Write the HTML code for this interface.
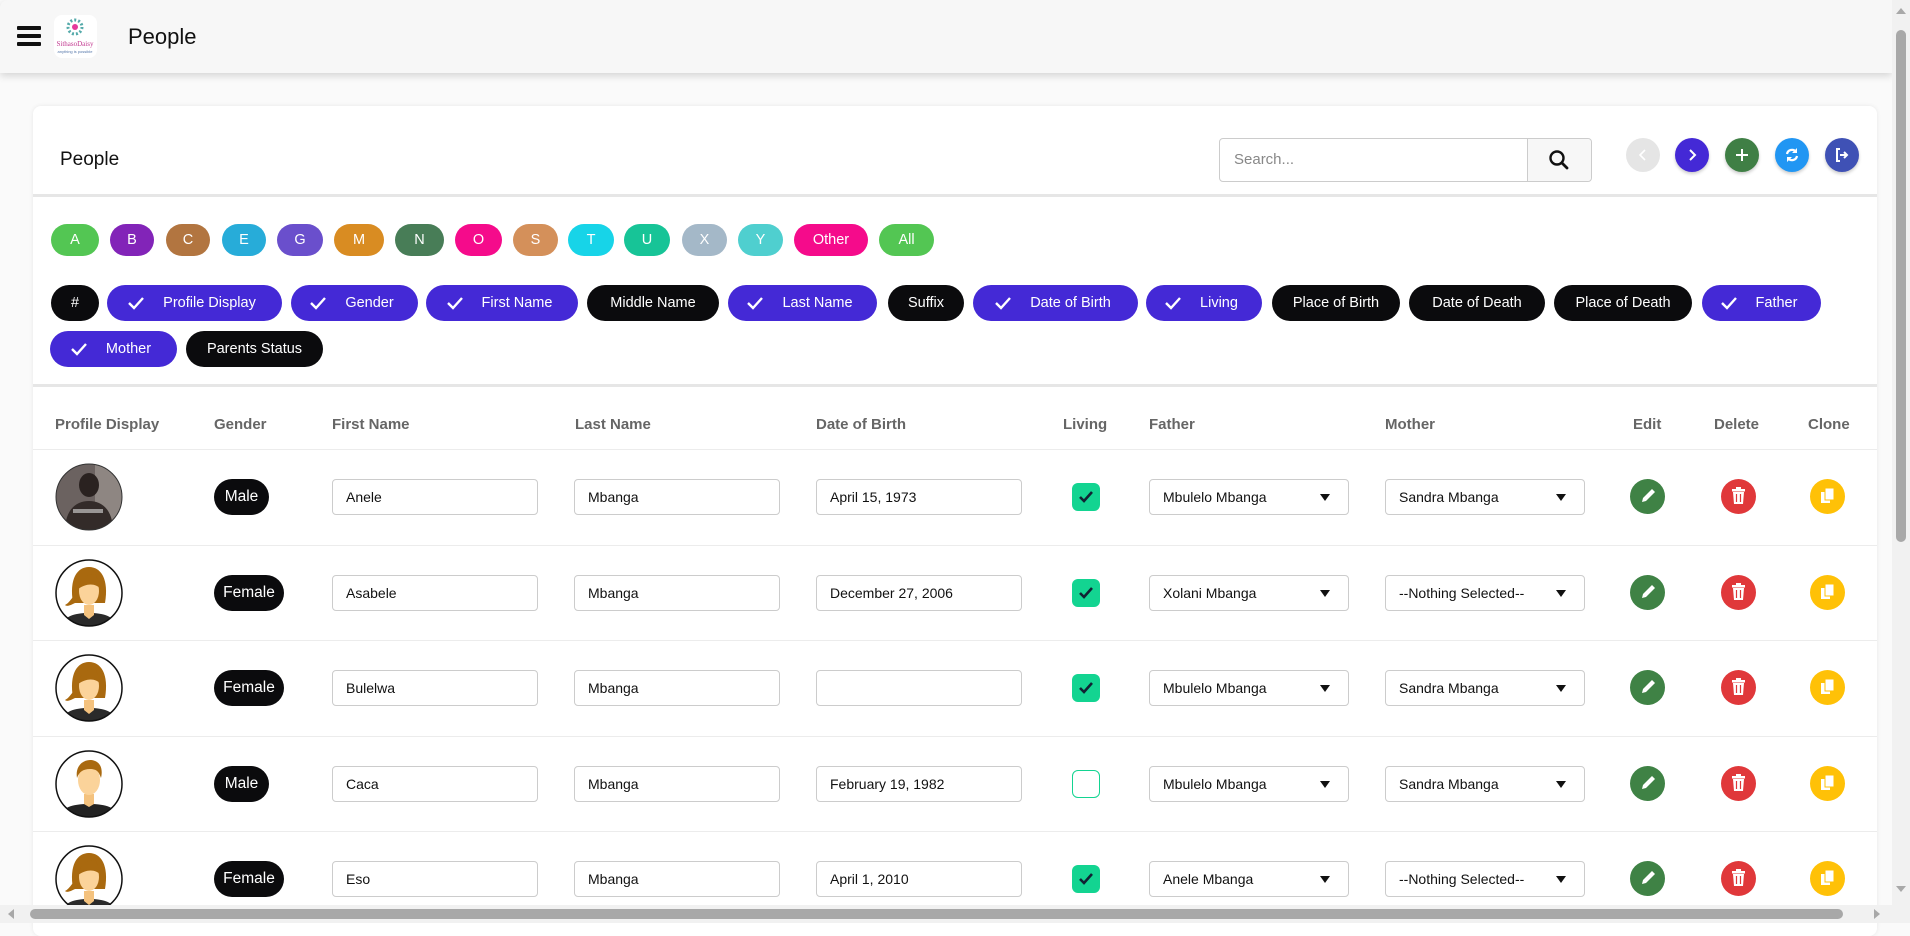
<!DOCTYPE html>
<html><head><meta charset="utf-8"><style>
*{box-sizing:border-box;margin:0;padding:0}
body{width:1910px;height:923px;overflow:hidden;background:#fafafa;font-family:"Liberation Sans",sans-serif;position:relative;color:#111}
.a{position:absolute}
.hdr{left:0;top:0;width:1892px;height:73px;background:#f7f7f7;box-shadow:0 3px 8px rgba(0,0,0,.15);border-top-left-radius:8px}
.ham{left:17px;width:24px;height:4px;background:#111;border-radius:1px}
.card{left:33px;top:106px;width:1844px;height:830px;background:#fff;border-radius:8px;box-shadow:0 0 5px rgba(0,0,0,.08)}
.hl{left:33px;width:1844px;height:3px;background:#e6e6e6}
.pill{height:32px;top:224px;border-radius:16px;color:#fff;font-size:14.5px;display:flex;align-items:center;justify-content:center}
.chip{height:36px;border-radius:18px;color:#fff;font-size:14.5px;display:flex;align-items:center;justify-content:center;background:#4429d6}
.chip.k{background:#0b0b0d}
.chip svg{margin-right:18px;margin-left:-6px}
.th{top:416px;font-size:15px;font-weight:bold;color:#666}
.row{left:33px;width:1844px;height:96px;border-top:1px solid #ececec}
.in{height:36px;border:1px solid #ccc;border-radius:4px;font-size:14px;padding-left:13px;display:flex;align-items:center;background:#fff}
.sel svg{position:absolute;right:18px;top:14px}
.badge{height:36px;border-radius:18px;background:#0b0b0d;color:#fff;font-size:15.5px;display:flex;align-items:center;justify-content:center}
.cb{width:28px;height:28px;border-radius:6px;background:#13d491;display:flex;align-items:center;justify-content:center}
.cb.off{background:#fff;border:1px solid #13d491}
.act{width:35px;height:35px;border-radius:50%;display:flex;align-items:center;justify-content:center}
.cir{width:34px;height:34px;border-radius:50%;top:138px;display:flex;align-items:center;justify-content:center;box-shadow:0 2px 3px rgba(0,0,0,.2)}
</style></head><body>
<div class="a hdr"></div>
<div class="a ham" style="top:26px"></div><div class="a ham" style="top:34px"></div><div class="a ham" style="top:42px"></div>
<div class="a" style="left:54px;top:15px;width:43px;height:43px;background:#fff;border-radius:8px;overflow:hidden">
<svg width="43" height="43"><circle cx="21" cy="12" r="7" fill="none" stroke="#5aa" stroke-width="3" stroke-dasharray="2 2"/><circle cx="21" cy="12" r="3" fill="#e5399b"/><text x="21" y="31" font-size="7" fill="#c2388f" text-anchor="middle" font-family="Liberation Serif">SithasoDaisy</text><text x="21" y="38" font-size="4" fill="#57a" text-anchor="middle">anything is possible</text></svg></div>
<div class="a" style="left:128px;top:24px;font-size:22px;color:#111">People</div>

<div class="a card"></div>
<div class="a" style="left:60px;top:149px;font-size:19px;color:#111">People</div>
<div class="a" style="left:1219px;top:138px;width:373px;height:44px;border:1px solid #ccc;border-radius:4px;background:#fff"></div>
<div class="a" style="left:1527px;top:139px;width:64px;height:42px;background:#f7f7f7;border-left:1px solid #ccc;border-radius:0 4px 4px 0"></div>
<div class="a" style="left:1234px;top:151px;font-size:15px;color:#888">Search...</div>
<svg class="a" style="left:1548px;top:149px" width="22" height="22"><circle cx="9" cy="9" r="6.5" fill="none" stroke="#111" stroke-width="2.4"/><path d="M14 14l5 5" stroke="#111" stroke-width="2.8" stroke-linecap="round"/></svg>
<div class="a cir" style="left:1626px;background:#e5e5e5;box-shadow:none"><svg width="14" height="14"><path d="M9 2L4 7l5 5" stroke="#fff" stroke-width="1.6" fill="none"/></svg></div>
<div class="a cir" style="left:1675px;background:#4429d6"><svg width="14" height="14"><path d="M5 2l5 5-5 5" stroke="#fff" stroke-width="2" fill="none"/></svg></div>
<div class="a cir" style="left:1725px;background:#3f7f45"><svg width="14" height="14"><path d="M7 1v12M1 7h12" stroke="#fff" stroke-width="2"/></svg></div>
<div class="a cir" style="left:1775px;background:#2196f3"><svg width="16" height="16"><path d="M3 7a5 5 0 0 1 9-2M13 9a5 5 0 0 1-9 2" stroke="#fff" stroke-width="2.2" fill="none"/><path d="M13 1v5H8zM3 15v-5h5z" fill="#fff"/></svg></div>
<div class="a cir" style="left:1825px;background:#3f51b5"><svg width="16" height="16"><path d="M6 2H3v12h3" stroke="#fff" stroke-width="2" fill="none"/><path d="M6 8h7M10 5l3 3-3 3" stroke="#fff" stroke-width="2" fill="none"/></svg></div>
<div class="a hl" style="top:194px"></div>

<div class="a pill" style="left:51px;width:48px;background:#53c653">A</div>
<div class="a pill" style="left:110px;width:44px;background:#8224b8">B</div>
<div class="a pill" style="left:166px;width:44px;background:#b27540">C</div>
<div class="a pill" style="left:222px;width:44px;background:#27acd9">E</div>
<div class="a pill" style="left:277px;width:46px;background:#6a4fcc">G</div>
<div class="a pill" style="left:334px;width:50px;background:#d98c22">M</div>
<div class="a pill" style="left:395px;width:49px;background:#487d57">N</div>
<div class="a pill" style="left:455px;width:47px;background:#f50b8b">O</div>
<div class="a pill" style="left:513px;width:45px;background:#d4905a">S</div>
<div class="a pill" style="left:568px;width:46px;background:#17d4e8">T</div>
<div class="a pill" style="left:624px;width:46px;background:#17c497">U</div>
<div class="a pill" style="left:682px;width:45px;background:#a4b8c8">X</div>
<div class="a pill" style="left:738px;width:45px;background:#4fcfcf">Y</div>
<div class="a pill" style="left:794px;width:74px;background:#f50b8b">Other</div>
<div class="a pill" style="left:879px;width:55px;background:#53c653">All</div>

<div class="a chip k" style="left:51px;top:285px;width:48px">#</div>
<div class="a chip" style="left:107px;top:285px;width:175px"><svg width="18" height="14"><path d="M2 7l5 5 9-10" stroke="#fff" stroke-width="2.4" fill="none"/></svg>Profile Display</div>
<div class="a chip" style="left:291px;top:285px;width:127px"><svg width="18" height="14"><path d="M2 7l5 5 9-10" stroke="#fff" stroke-width="2.4" fill="none"/></svg>Gender</div>
<div class="a chip" style="left:426px;top:285px;width:152px"><svg width="18" height="14"><path d="M2 7l5 5 9-10" stroke="#fff" stroke-width="2.4" fill="none"/></svg>First Name</div>
<div class="a chip k" style="left:587px;top:285px;width:132px">Middle Name</div>
<div class="a chip" style="left:728px;top:285px;width:149px"><svg width="18" height="14"><path d="M2 7l5 5 9-10" stroke="#fff" stroke-width="2.4" fill="none"/></svg>Last Name</div>
<div class="a chip k" style="left:888px;top:285px;width:76px">Suffix</div>
<div class="a chip" style="left:973px;top:285px;width:165px"><svg width="18" height="14"><path d="M2 7l5 5 9-10" stroke="#fff" stroke-width="2.4" fill="none"/></svg>Date of Birth</div>
<div class="a chip" style="left:1146px;top:285px;width:116px"><svg width="18" height="14"><path d="M2 7l5 5 9-10" stroke="#fff" stroke-width="2.4" fill="none"/></svg>Living</div>
<div class="a chip k" style="left:1272px;top:285px;width:128px">Place of Birth</div>
<div class="a chip k" style="left:1409px;top:285px;width:136px">Date of Death</div>
<div class="a chip k" style="left:1554px;top:285px;width:138px">Place of Death</div>
<div class="a chip" style="left:1702px;top:285px;width:119px"><svg width="18" height="14"><path d="M2 7l5 5 9-10" stroke="#fff" stroke-width="2.4" fill="none"/></svg>Father</div>
<div class="a chip" style="left:50px;top:331px;width:127px"><svg width="18" height="14"><path d="M2 7l5 5 9-10" stroke="#fff" stroke-width="2.4" fill="none"/></svg>Mother</div>
<div class="a chip k" style="left:186px;top:331px;width:137px">Parents Status</div>
<div class="a hl" style="top:384px"></div>

<div class="a th" style="left:55px">Profile Display</div>
<div class="a th" style="left:214px">Gender</div>
<div class="a th" style="left:332px">First Name</div>
<div class="a th" style="left:575px">Last Name</div>
<div class="a th" style="left:816px">Date of Birth</div>
<div class="a th" style="left:1063px">Living</div>
<div class="a th" style="left:1149px">Father</div>
<div class="a th" style="left:1385px">Mother</div>
<div class="a th" style="left:1633px">Edit</div>
<div class="a th" style="left:1714px">Delete</div>
<div class="a th" style="left:1808px">Clone</div>

<div class="a row" style="top:449px"></div>
<div class="a row" style="top:545px"></div>
<div class="a row" style="top:640px"></div>
<div class="a row" style="top:736px"></div>
<div class="a row" style="top:831px"></div>

<svg width="0" height="0" style="position:absolute"><defs>
<clipPath id="cc"><circle cx="34" cy="34" r="33"/></clipPath>
<g id="fem"><g clip-path="url(#cc)"><rect width="68" height="68" fill="#fff"/><path d="M18 44C14 20 22 8 34 8s20 12 16 36z" fill="#a9690f"/><path d="M6 68c2-10 12-14 28-14s26 4 28 14z" fill="#2a2a2a"/><path d="M29 46h10v10l-5 4-5-4z" fill="#f4c27e"/><ellipse cx="34" cy="32" rx="10" ry="14" fill="#fbd39a"/><path d="M23 30c2-10 8-16 18-14l5 14c-6-6-14-6-23 0z" fill="#a9690f"/><path d="M20 44c-4 2-8 4-10 2 4-2 6-6 8-8z" fill="#a9690f"/></g><circle cx="34" cy="34" r="33" fill="none" stroke="#111" stroke-width="1.5"/></g>
<g id="mal"><g clip-path="url(#cc)"><rect width="68" height="68" fill="#fff"/><path d="M4 68c2-10 12-14 30-14s28 4 30 14z" fill="#222"/><path d="M29 44h10v10l-5 3-5-3z" fill="#f4c27e"/><ellipse cx="34" cy="30" rx="11" ry="15" fill="#fbd39a"/><path d="M22 28c-2-12 6-18 13-18s14 5 11 18c-2-6-4-9-11-9s-11 3-13 9z" fill="#a9690f"/></g><circle cx="34" cy="34" r="33" fill="none" stroke="#111" stroke-width="1.5"/></g>
<g id="ph"><g clip-path="url(#cc)"><rect width="68" height="68" fill="#6b6260"/><rect x="40" width="28" height="68" fill="#8e8682"/><ellipse cx="34" cy="22" rx="10" ry="12" fill="#2a2220"/><path d="M10 68c0-20 10-30 24-30s24 10 24 30z" fill="#332b29"/><rect x="18" y="46" width="30" height="4" fill="#ddd" opacity=".6"/></g><circle cx="34" cy="34" r="33" fill="none" stroke="#333" stroke-width="1"/></g>
</defs></svg>

<svg class="a" style="left:55px;top:463px" width="68" height="68"><use href="#ph"/></svg>
<svg class="a" style="left:55px;top:559px" width="68" height="68"><use href="#fem"/></svg>
<svg class="a" style="left:55px;top:654px" width="68" height="68"><use href="#fem"/></svg>
<svg class="a" style="left:55px;top:750px" width="68" height="68"><use href="#mal"/></svg>
<svg class="a" style="left:55px;top:845px" width="68" height="68"><use href="#fem"/></svg>

<div class="a badge" style="left:214px;top:479px;width:55px">Male</div>
<div class="a badge" style="left:214px;top:575px;width:70px">Female</div>
<div class="a badge" style="left:214px;top:670px;width:70px">Female</div>
<div class="a badge" style="left:214px;top:766px;width:55px">Male</div>
<div class="a badge" style="left:214px;top:861px;width:70px">Female</div>

<div class="a in" style="left:332px;top:479px;width:206px">Anele</div>
<div class="a in" style="left:332px;top:575px;width:206px">Asabele</div>
<div class="a in" style="left:332px;top:670px;width:206px">Bulelwa</div>
<div class="a in" style="left:332px;top:766px;width:206px">Caca</div>
<div class="a in" style="left:332px;top:861px;width:206px">Eso</div>
<div class="a in" style="left:574px;top:479px;width:206px">Mbanga</div>
<div class="a in" style="left:574px;top:575px;width:206px">Mbanga</div>
<div class="a in" style="left:574px;top:670px;width:206px">Mbanga</div>
<div class="a in" style="left:574px;top:766px;width:206px">Mbanga</div>
<div class="a in" style="left:574px;top:861px;width:206px">Mbanga</div>
<div class="a in" style="left:816px;top:479px;width:206px">April 15, 1973</div>
<div class="a in" style="left:816px;top:575px;width:206px">December 27, 2006</div>
<div class="a in" style="left:816px;top:670px;width:206px"></div>
<div class="a in" style="left:816px;top:766px;width:206px">February 19, 1982</div>
<div class="a in" style="left:816px;top:861px;width:206px">April 1, 2010</div>

<div class="a cb" style="left:1072px;top:483px"><svg width="16" height="14"><path d="M2 7l4 4 8-9" stroke="#123" stroke-width="2.6" fill="none"/></svg></div>
<div class="a cb" style="left:1072px;top:579px"><svg width="16" height="14"><path d="M2 7l4 4 8-9" stroke="#123" stroke-width="2.6" fill="none"/></svg></div>
<div class="a cb" style="left:1072px;top:674px"><svg width="16" height="14"><path d="M2 7l4 4 8-9" stroke="#123" stroke-width="2.6" fill="none"/></svg></div>
<div class="a cb off" style="left:1072px;top:770px"></div>
<div class="a cb" style="left:1072px;top:865px"><svg width="16" height="14"><path d="M2 7l4 4 8-9" stroke="#123" stroke-width="2.6" fill="none"/></svg></div>

<div class="a in sel" style="left:1149px;top:479px;width:200px">Mbulelo Mbanga<svg width="10" height="7"><path d="M0 0h10L5 7z" fill="#111"/></svg></div>
<div class="a in sel" style="left:1149px;top:575px;width:200px">Xolani Mbanga<svg width="10" height="7"><path d="M0 0h10L5 7z" fill="#111"/></svg></div>
<div class="a in sel" style="left:1149px;top:670px;width:200px">Mbulelo Mbanga<svg width="10" height="7"><path d="M0 0h10L5 7z" fill="#111"/></svg></div>
<div class="a in sel" style="left:1149px;top:766px;width:200px">Mbulelo Mbanga<svg width="10" height="7"><path d="M0 0h10L5 7z" fill="#111"/></svg></div>
<div class="a in sel" style="left:1149px;top:861px;width:200px">Anele Mbanga<svg width="10" height="7"><path d="M0 0h10L5 7z" fill="#111"/></svg></div>
<div class="a in sel" style="left:1385px;top:479px;width:200px">Sandra Mbanga<svg width="10" height="7"><path d="M0 0h10L5 7z" fill="#111"/></svg></div>
<div class="a in sel" style="left:1385px;top:575px;width:200px">--Nothing Selected--<svg width="10" height="7"><path d="M0 0h10L5 7z" fill="#111"/></svg></div>
<div class="a in sel" style="left:1385px;top:670px;width:200px">Sandra Mbanga<svg width="10" height="7"><path d="M0 0h10L5 7z" fill="#111"/></svg></div>
<div class="a in sel" style="left:1385px;top:766px;width:200px">Sandra Mbanga<svg width="10" height="7"><path d="M0 0h10L5 7z" fill="#111"/></svg></div>
<div class="a in sel" style="left:1385px;top:861px;width:200px">--Nothing Selected--<svg width="10" height="7"><path d="M0 0h10L5 7z" fill="#111"/></svg></div>

<svg width="0" height="0" style="position:absolute"><defs>
<g id="ed"><circle cx="17.5" cy="17.5" r="17.5" fill="#3f8245"/><path d="M12 23l1-4 9-9 3 3-9 9z" fill="#fff"/></g>
<g id="de"><circle cx="17.5" cy="17.5" r="17.5" fill="#e0383a"/><rect x="11" y="10" width="13" height="2.5" fill="#fff"/><rect x="15" y="8" width="5" height="2" fill="#fff"/><path d="M12 13h11l-1 12h-9z" fill="#fff"/><path d="M15.5 15v8M19.5 15v8" stroke="#e0383a" stroke-width="1.2"/></g>
<g id="cl"><circle cx="17.5" cy="17.5" r="17.5" fill="#ffc107"/><rect x="11" y="13" width="9" height="11" fill="#fff"/><rect x="15" y="9" width="9" height="12" fill="#fff" stroke="#ffc107" stroke-width="1"/></g>
</defs></svg>
<svg class="a" style="left:1630px;top:479px" width="35" height="35"><use href="#ed"/></svg>
<svg class="a" style="left:1630px;top:575px" width="35" height="35"><use href="#ed"/></svg>
<svg class="a" style="left:1630px;top:670px" width="35" height="35"><use href="#ed"/></svg>
<svg class="a" style="left:1630px;top:766px" width="35" height="35"><use href="#ed"/></svg>
<svg class="a" style="left:1630px;top:861px" width="35" height="35"><use href="#ed"/></svg>
<svg class="a" style="left:1721px;top:479px" width="35" height="35"><use href="#de"/></svg>
<svg class="a" style="left:1721px;top:575px" width="35" height="35"><use href="#de"/></svg>
<svg class="a" style="left:1721px;top:670px" width="35" height="35"><use href="#de"/></svg>
<svg class="a" style="left:1721px;top:766px" width="35" height="35"><use href="#de"/></svg>
<svg class="a" style="left:1721px;top:861px" width="35" height="35"><use href="#de"/></svg>
<svg class="a" style="left:1810px;top:479px" width="35" height="35"><use href="#cl"/></svg>
<svg class="a" style="left:1810px;top:575px" width="35" height="35"><use href="#cl"/></svg>
<svg class="a" style="left:1810px;top:670px" width="35" height="35"><use href="#cl"/></svg>
<svg class="a" style="left:1810px;top:766px" width="35" height="35"><use href="#cl"/></svg>
<svg class="a" style="left:1810px;top:861px" width="35" height="35"><use href="#cl"/></svg>

<div class="a" style="left:1892px;top:0;width:18px;height:923px;background:#f1f1f1"></div>
<div class="a" style="left:1896px;top:30px;width:10px;height:512px;background:#a8a8a8;border-radius:5px"></div>
<div class="a" style="left:0;top:905px;width:1892px;height:18px;background:#f1f1f1"></div>
<div class="a" style="left:30px;top:909px;width:1813px;height:10px;background:#a8a8a8;border-radius:5px"></div>
<svg class="a" style="left:6px;top:908px" width="10" height="12"><path d="M8 1L2 6l6 5z" fill="#a8a8a8"/></svg>
<svg class="a" style="left:1872px;top:908px" width="10" height="12"><path d="M2 1l6 5-6 5z" fill="#a8a8a8"/></svg>
<svg class="a" style="left:1895px;top:6px" width="12" height="10"><path d="M1 8l5-6 5 6z" fill="#a8a8a8"/></svg>
<svg class="a" style="left:1895px;top:884px" width="12" height="10"><path d="M1 2l5 6 5-6z" fill="#a8a8a8"/></svg>
</body></html>
